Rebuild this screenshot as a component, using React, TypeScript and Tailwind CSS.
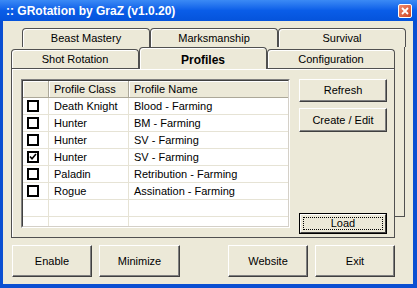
import React from "react";

const font = "font-['Liberation_Sans',Arial,sans-serif]";

const rows = [
  { cls: "Death Knight", name: "Blood - Farming", on: false },
  { cls: "Hunter", name: "BM - Farming", on: false },
  { cls: "Hunter", name: "SV - Farming", on: false },
  { cls: "Hunter", name: "SV - Farming", on: true },
  { cls: "Paladin", name: "Retribution - Farming", on: false },
  { cls: "Rogue", name: "Assination - Farming", on: false },
  null,
  null,
];

function Btn({ label, className }: { label: string; className: string }) {
  return (
    <div
      className={`flex items-center justify-center bg-[#ece9d8] border border-t-white border-l-white border-r-[#404040] border-b-[#404040] shadow-[inset_-1px_-1px_#808080] text-[11px] text-black ${className}`}
    >
      {label}
    </div>
  );
}

function Tab({ label }: { label: string }) {
  return (
    <div className="flex h-[19px] w-[128px] items-center justify-center rounded-t-[4px] border border-b-0 border-[#505050] bg-[#ece9d8] shadow-[inset_1px_1px_white] text-[11px] text-black">
      {label}
    </div>
  );
}

function CheckBox({ on }: { on: boolean }) {
  return (
    <div className="flex h-[12px] w-[12px] items-center justify-center border-2 border-black bg-white">
      {on && (
        <svg width="8" height="8" viewBox="0 0 8 8">
          <path d="M1 3.5 L3 5.8 L7 1" fill="none" stroke="black" strokeWidth="1.6" />
        </svg>
      )}
    </div>
  );
}

function ProfileList() {
  return (
    <div className="h-[149px] w-[269px] border border-t-[#808080] border-l-[#808080] border-r-white border-b-white">
      <div className="flex h-full w-full flex-col overflow-hidden border border-t-[#404040] border-l-[#404040] border-r-[#d4d0c8] border-b-[#d4d0c8] bg-white">
        <div className="flex h-[17px] shrink-0 text-[11px]">
          <div className="w-[26px] border-r border-b border-[#aca899] bg-[#ece9d8] shadow-[inset_1px_1px_white]" />
          <div className="flex w-[80px] items-center border-r border-b border-[#aca899] bg-[#ece9d8] pl-[5px] shadow-[inset_1px_1px_white]">
            Profile Class
          </div>
          <div className="flex flex-1 items-center border-b border-[#aca899] bg-[#ece9d8] pl-[5px] shadow-[inset_1px_1px_white]">
            Profile Name
          </div>
        </div>
        {rows.map((r, i) => (
          <div key={i} className="flex h-[17px] shrink-0 text-[11px] text-black">
            <div className="flex w-[26px] items-center border-r border-b border-[#e6e3d5] pl-[4px]">
              {r && <CheckBox on={r.on} />}
            </div>
            <div className="flex w-[80px] items-center border-r border-b border-[#e6e3d5] pl-[5px]">
              {r?.cls}
            </div>
            <div className="flex flex-1 items-center border-b border-[#e6e3d5] pl-[5px]">
              {r?.name}
            </div>
          </div>
        ))}
      </div>
    </div>
  );
}

export default function App() {
  return (
    <div className={`${font} flex h-[288px] w-[417px] flex-col bg-[#0a4fd2]`}>
      <div className="flex h-[21px] shrink-0 items-center justify-between bg-gradient-to-b from-[#3b8af5] via-[#0a5de8] to-[#0553db] pl-[6px] pr-[5px]">
        <span className="text-[12px] font-bold text-white">:: GRotation by GraZ (v1.0.20)</span>
        <div className="flex h-[14px] w-[14px] items-center justify-center rounded-[2px] border border-white bg-gradient-to-br from-[#f08a6c] to-[#d0451f]">
          <svg width="8" height="8" viewBox="0 0 8 8">
            <path d="M1 1 L7 7 M7 1 L1 7" stroke="white" strokeWidth="1.8" />
          </svg>
        </div>
      </div>
      <div className="mx-[3px] mr-[4px] mb-[4px] flex flex-1 flex-col bg-[#ece9d8]">
        <div className="ml-[8px] mt-[7px] flex flex-col">
          <div className="flex pl-[11px]">
            <Tab label="Beast Mastery" />
            <Tab label="Marksmanship" />
            <Tab label="Survival" />
          </div>
          <div className="flex">
            <div className="flex w-[384px] flex-col">
              <div className="flex h-[21px] items-end">
                <Tab label="Shot Rotation" />
                <div className="relative z-10 -mb-px flex h-[22px] w-[128px] items-center justify-center rounded-t-[4px] border border-b-0 border-[#505050] bg-[#ece9d8] pt-[2px] shadow-[inset_1px_1px_white] text-[12px] font-bold text-black">
                  Profiles
                </div>
                <Tab label="Configuration" />
              </div>
              <div className="flex h-[170px] border border-[#505050] pl-[9px] pt-[10px] shadow-[inset_1px_1px_white]">
                <ProfileList />
                <div className="ml-[9px] flex w-[88px] flex-col pb-[3px]">
                  <Btn label="Refresh" className="h-[23px]" />
                  <Btn label="Create / Edit" className="mt-[6px] h-[24px]" />
                  <div className="flex-1" />
                  <div className="h-[21px] border border-black">
                    <div className="flex h-full w-full items-center justify-center border border-t-white border-l-white border-r-[#404040] border-b-[#404040] bg-[#ece9d8] p-[2px] text-[11px]">
                      <div className="flex h-full w-full items-center justify-center border border-dotted border-black">
                        Load
                      </div>
                    </div>
                  </div>
                </div>
              </div>
            </div>
            <div className="h-[170px] w-[10px] border-r border-b border-[#505050]" />
          </div>
        </div>
        <div className="mt-[7px] flex pl-[9px]">
          <Btn label="Enable" className="h-[32px] w-[80px]" />
          <Btn label="Minimize" className="ml-[7px] h-[32px] w-[81px]" />
          <Btn label="Website" className="ml-[48px] h-[32px] w-[80px]" />
          <Btn label="Exit" className="ml-[7px] h-[32px] w-[80px]" />
        </div>
      </div>
    </div>
  );
}
